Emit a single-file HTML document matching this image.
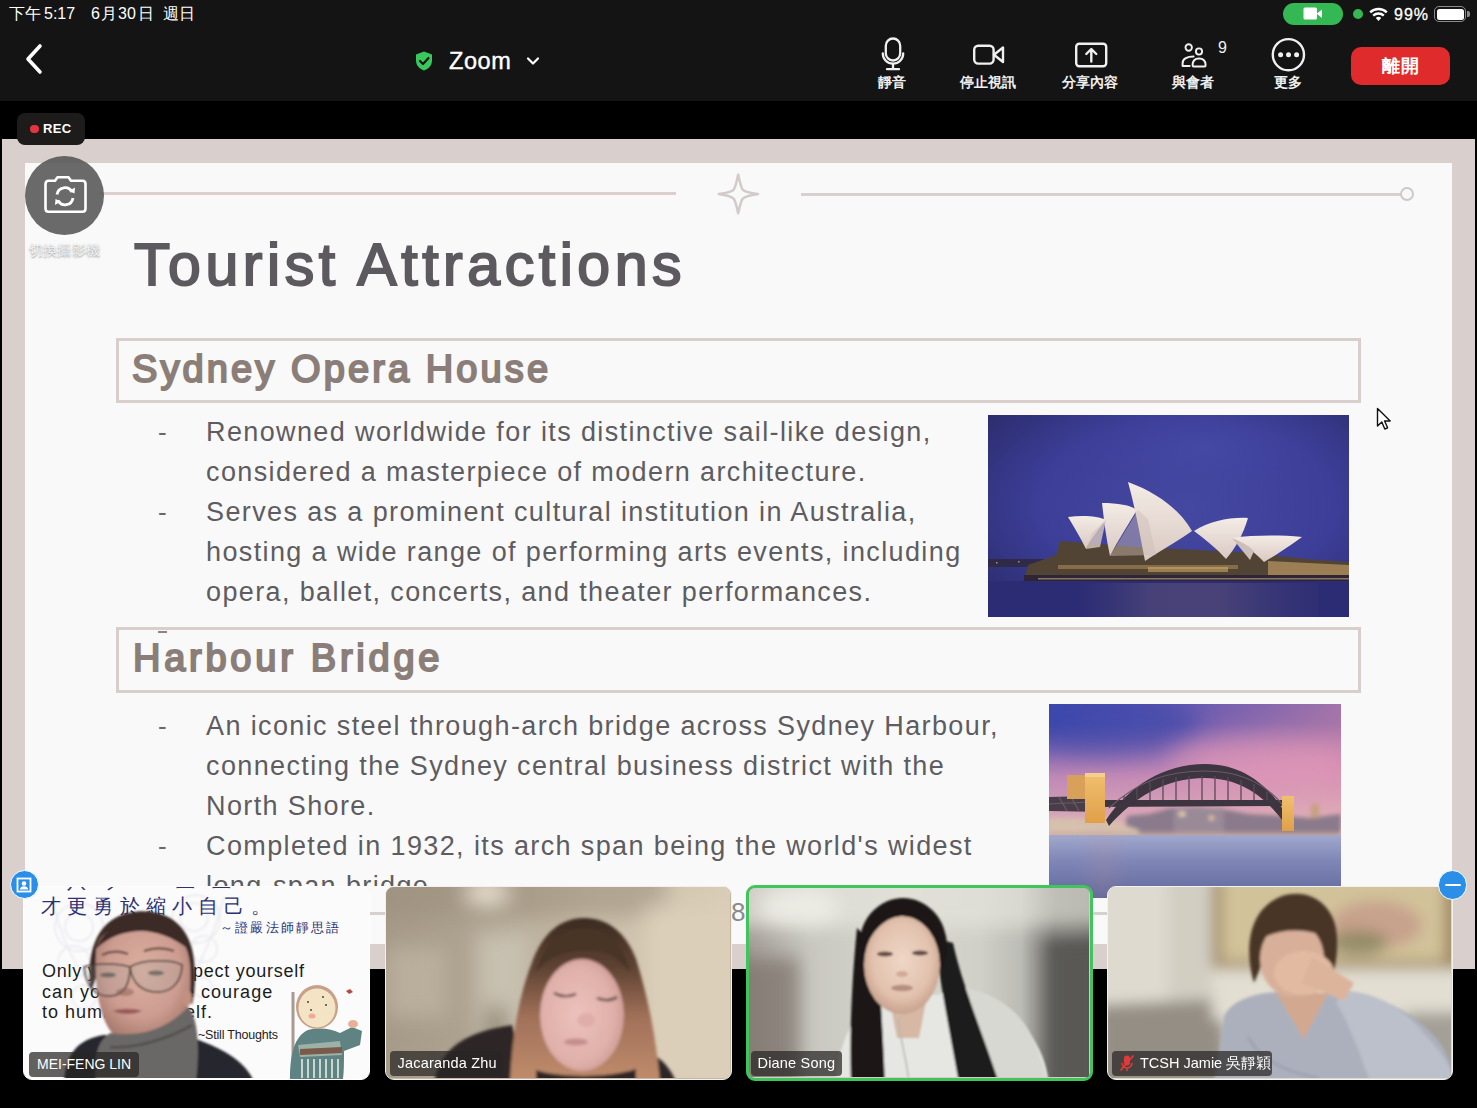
<!DOCTYPE html>
<html><head><meta charset="utf-8">
<style>
*{margin:0;padding:0;box-sizing:border-box}
html,body{width:1477px;height:1108px;overflow:hidden;background:#000;font-family:"Liberation Sans",sans-serif;position:relative}
.abs{position:absolute}
#top{position:absolute;left:0;top:0;width:1477px;height:101px;background:#141414}
.st{color:#fff;font-size:16px;top:4px;white-space:nowrap;line-height:20px}
.lbl{position:absolute;color:#f0f0f0;font-size:14px;font-weight:bold;top:73px;white-space:nowrap;text-align:center;line-height:18px;width:80px;margin-left:-40px}
#slideOuter{left:2px;top:139px;width:1473px;height:830px;background:#d9d0cd}
#slide{left:25px;top:163px;width:1427px;height:781px;background:#f9f9f9;overflow:hidden}
.body{position:absolute;color:#5e5c60;font-size:27px;white-space:nowrap;line-height:40px;letter-spacing:1.38px;left:206px;margin-top:-0.4px}
.dash{position:absolute;color:#6a686c;font-size:26px;line-height:40px;left:158px}
.box{position:absolute;border:3px solid #d8cfcd}
.sec{position:absolute;color:#8b7e78;font-size:38px;font-weight:normal;white-space:nowrap;line-height:38px;letter-spacing:3.1px;-webkit-text-stroke:2px #8b7e78}
.tile{position:absolute;top:886px;height:194px;border-radius:9px;overflow:hidden}
.name{position:absolute;left:5px;bottom:5px;height:25px;background:rgba(40,38,36,.72);color:#fff;font-size:14.5px;line-height:25px;padding:0 8px;border-radius:4px;white-space:nowrap;letter-spacing:0.2px}
</style></head>
<body>
<!-- ===== TOP BAR ===== -->
<div id="top">
  <div class="abs st" style="left:9px;letter-spacing:-0.5px">下午</div><div class="abs st" style="left:44px">5:17</div><div class="abs st" style="left:91px">6</div><div class="abs st" style="left:101px">月</div><div class="abs st" style="left:118px">30</div><div class="abs st" style="left:138px">日</div><div class="abs st" style="left:163px">週日</div>
  <!-- green camera pill -->
  <div class="abs" style="left:1283px;top:3px;width:60px;height:22px;border-radius:11px;background:#34b853"></div>
  <svg class="abs" style="left:1300px;top:5px" width="26" height="18" viewBox="0 0 26 18">
    <rect x="3.5" y="2.5" width="13.5" height="12" rx="1.5" fill="#fff"/>
    <path d="M17 8.5 L22 4.5 V13 L17 9 Z" fill="#fff"/>
  </svg>
  <div class="abs" style="left:1353px;top:9px;width:10px;height:10px;border-radius:5px;background:#34b853"></div>
  <svg class="abs" style="left:1368px;top:6px" width="21" height="16" viewBox="0 0 21 16">
    <path d="M10.5 15 L13.2 12 A4 4 0 0 0 7.8 12 Z" fill="#fff"/>
    <path d="M5.2 9.6 A7.6 7.6 0 0 1 15.8 9.6" stroke="#fff" stroke-width="2.4" fill="none"/>
    <path d="M2.2 6.4 A12 12 0 0 1 18.8 6.4" stroke="#fff" stroke-width="2.4" fill="none"/>
  </svg>
  <div class="abs st" style="left:1394px;top:4.5px;font-size:16px;letter-spacing:1px;-webkit-text-stroke:0.3px #fff">99%</div>
  <div class="abs" style="left:1434px;top:6px;width:32px;height:16px;border-radius:5px;border:1.3px solid #8a8a8a"></div>
  <div class="abs" style="left:1436.5px;top:8.5px;width:27px;height:11px;border-radius:2.5px;background:#fff"></div>
  <div class="abs" style="left:1467px;top:11px;width:2.5px;height:6px;border-radius:0 2px 2px 0;background:#8a8a8a"></div>

  <!-- back chevron -->
  <svg class="abs" style="left:20px;top:42px" width="28" height="34" viewBox="0 0 28 34">
    <path d="M20 4 L8 17 L20 30" stroke="#fff" stroke-width="3.6" fill="none" stroke-linecap="round" stroke-linejoin="round"/>
  </svg>
  <!-- shield -->
  <svg class="abs" style="left:413px;top:50px" width="22" height="22" viewBox="0 0 22 22">
    <path d="M11 1.5 L19 4.5 V10.5 C19 15.5 15.5 19 11 20.5 C6.5 19 3 15.5 3 10.5 V4.5 Z" fill="#38c85c"/>
    <path d="M7 11 L10 14 L15.5 8" stroke="#141414" stroke-width="2.2" fill="none" stroke-linecap="round" stroke-linejoin="round"/>
  </svg>
  <div class="abs" style="left:449px;top:48px;color:#fff;font-size:23.5px;line-height:26px;letter-spacing:0.6px;-webkit-text-stroke:0.4px #fff">Zoom</div>
  <svg class="abs" style="left:524px;top:54px" width="18" height="14" viewBox="0 0 18 14">
    <path d="M4 4.5 L9 9.5 L14 4.5" stroke="#fff" stroke-width="2.2" fill="none" stroke-linecap="round" stroke-linejoin="round"/>
  </svg>

  <!-- mic -->
  <svg class="abs" style="left:878px;top:36px" width="30" height="36" viewBox="0 0 30 36">
    <rect x="7.8" y="2.5" width="14.4" height="22" rx="7.2" stroke="#f0f0f0" stroke-width="2.3" fill="none"/>
    <path d="M4.8 17.5 A10.2 10.2 0 0 0 25.2 17.5" stroke="#f0f0f0" stroke-width="2.3" fill="none" stroke-linecap="round"/>
    <path d="M15 28 V33 M9 33.2 H21" stroke="#f0f0f0" stroke-width="2.3" stroke-linecap="round"/>
  </svg>
  <div class="lbl" style="left:892px">靜音</div>
  <!-- video -->
  <svg class="abs" style="left:970px;top:42px" width="38" height="26" viewBox="0 0 38 26">
    <rect x="4.2" y="3.8" width="19.4" height="17.8" rx="4" stroke="#f0f0f0" stroke-width="2.4" fill="none"/>
    <path d="M24 12.7 L33 5.5 V20 Z" stroke="#f0f0f0" stroke-width="2.4" fill="none" stroke-linejoin="round"/>
  </svg>
  <div class="lbl" style="left:988px">停止視訊</div>
  <!-- share -->
  <svg class="abs" style="left:1072px;top:40px" width="38" height="30" viewBox="0 0 38 30">
    <rect x="4.2" y="3.8" width="30" height="22.4" rx="3" stroke="#f0f0f0" stroke-width="2.4" fill="none"/>
    <path d="M19.3 21.5 V9.5 M14.3 14 L19.3 9 L24.3 14" stroke="#f0f0f0" stroke-width="2.4" fill="none" stroke-linecap="round" stroke-linejoin="round"/>
  </svg>
  <div class="lbl" style="left:1090px">分享內容</div>
  <!-- participants -->
  <svg class="abs" style="left:1178px;top:40px" width="32" height="30" viewBox="0 0 32 30">
    <circle cx="10.7" cy="7.5" r="3.2" stroke="#f0f0f0" stroke-width="1.9" fill="none"/>
    <circle cx="21" cy="11.5" r="3.1" stroke="#f0f0f0" stroke-width="1.9" fill="none"/>
    <path d="M15.6 16.6 C9.5 16.6 4.6 18.5 4.6 23.2 V26 H11.6" stroke="#f0f0f0" stroke-width="2" fill="none" stroke-linecap="round" stroke-linejoin="round"/>
    <path d="M15.6 26.4 H26.6 C27.3 26.4 27.6 26 27.6 25.2 C27.6 20.8 24.8 18.5 21 18.5 C17.3 18.5 14.6 20.8 14.6 25.2 C14.6 26 14.9 26.4 15.6 26.4 Z" stroke="#f0f0f0" stroke-width="2" fill="none"/>
  </svg>
  <div class="abs" style="left:1218px;top:40px;color:#f0f0f0;font-size:16px;line-height:16px">9</div>
  <div class="lbl" style="left:1193px">與會者</div>
  <!-- more -->
  <svg class="abs" style="left:1270px;top:37px" width="36" height="36" viewBox="0 0 36 36">
    <circle cx="18.4" cy="17.7" r="15.6" stroke="#f0f0f0" stroke-width="2.4" fill="none"/>
    <circle cx="10.6" cy="17.7" r="2.5" fill="#f0f0f0"/>
    <circle cx="18.5" cy="17.7" r="2.5" fill="#f0f0f0"/>
    <circle cx="26.6" cy="17.7" r="2.5" fill="#f0f0f0"/>
  </svg>
  <div class="lbl" style="left:1288px">更多</div>
  <!-- leave -->
  <div class="abs" style="left:1351px;top:47px;width:99px;height:38px;border-radius:10px;background:#df2b2b;color:#fff;font-size:18px;font-weight:bold;line-height:38px;text-align:center;letter-spacing:1px">離開</div>
</div>

<!-- ===== SLIDE ===== -->
<div class="abs" id="slideOuter"></div>
<div class="abs" id="slide"></div>
<div class="abs" id="content" style="left:0;top:0;width:1477px;height:886px;overflow:hidden">
  <!-- decorative top lines -->
  <div class="abs" style="left:100px;top:192px;width:576px;height:3px;background:#dccfcd"></div>
  <div class="abs" style="left:801px;top:192.5px;width:600px;height:3px;background:#d6d0ce"></div>
  <div class="abs" style="left:1400px;top:187px;width:14px;height:14px;border-radius:7px;border:2.5px solid #cfc9c7;background:#f9f8f8"></div>
  <svg class="abs" style="left:716px;top:171px" width="46" height="46" viewBox="0 0 46 46">
    <path d="M22.2 3.6 C24 12 25 16.5 26.6 18.6 C28.5 20.5 33 21.8 42 23.1 C33 24.5 28.5 25.8 26.6 27.8 C25 30 24 34 22.2 42.3 C20.4 34 19.4 30 17.8 27.8 C15.9 25.8 11.4 24.5 2.8 23.1 C11.4 21.8 15.9 20.5 17.8 18.6 C19.4 16.5 20.4 12 22.2 3.6 Z" stroke="#d2cbca" stroke-width="2.5" fill="none" stroke-linejoin="round"/>
  </svg>

  <div class="abs" style="left:134px;top:236px;color:#5d5a5f;font-size:59px;font-weight:normal;line-height:59px;letter-spacing:4.55px;white-space:nowrap;-webkit-text-stroke:2px #5d5a5f">Tourist Attractions</div>

  <div class="box" style="left:116px;top:338px;width:1245px;height:65px"></div>
  <div class="sec" style="left:132px;top:350px">Sydney Opera House</div>

  <div class="dash" style="top:412px">-</div>
  <div class="body" style="top:412px">Renowned worldwide for its distinctive sail-like design,</div>
  <div class="body" style="top:452px">considered a masterpiece of modern architecture.</div>
  <div class="dash" style="top:492px">-</div>
  <div class="body" style="top:492px">Serves as a prominent cultural institution in Australia,</div>
  <div class="body" style="top:532px">hosting a wide range of performing arts events, including</div>
  <div class="body" style="top:572px">opera, ballet, concerts, and theater performances.</div>

  <div class="box" style="left:116px;top:627px;width:1245px;height:66px"></div>
  <div class="abs" style="left:158px;top:631px;width:9px;height:2px;background:#8b8589"></div>
  <div class="sec" style="left:133px;top:639px;letter-spacing:3.75px">Harbour Bridge</div>

  <div class="dash" style="top:706px">-</div>
  <div class="body" style="top:706px">An iconic steel through-arch bridge across Sydney Harbour,</div>
  <div class="body" style="top:746px">connecting the Sydney central business district with the</div>
  <div class="body" style="top:786px">North Shore.</div>
  <div class="dash" style="top:826px">-</div>
  <div class="body" style="top:826px">Completed in 1932, its arch span being the world's widest</div>
  <div class="body" style="top:866px">long-span bridge.</div>

  <div id="opera" class="abs" style="left:988px;top:415px;width:361px;height:202px;overflow:hidden"><svg width="361" height="202" viewBox="0 0 361 202" style="filter:blur(0.5px)">
  <defs>
    <radialGradient id="osky" cx="0.55" cy="0.45" r="0.75">
      <stop offset="0" stop-color="#4649a2"/>
      <stop offset="0.55" stop-color="#3c3e98"/>
      <stop offset="1" stop-color="#2a2a68"/>
    </radialGradient>
    <radialGradient id="oglow" cx="0.6" cy="0.2" r="0.5">
      <stop offset="0" stop-color="#4a4ea8" stop-opacity="0.6"/>
      <stop offset="1" stop-color="#3a3c96" stop-opacity="0"/>
    </radialGradient>
    <linearGradient id="owater" x1="0" y1="0" x2="0" y2="1">
      <stop offset="0" stop-color="#2c2f74"/>
      <stop offset="1" stop-color="#2a2c70"/>
    </linearGradient>
    <linearGradient id="osail" x1="0" y1="0" x2="0" y2="1">
      <stop offset="0" stop-color="#f4ece6"/>
      <stop offset="1" stop-color="#d9c9c2"/>
    </linearGradient>
    <linearGradient id="orefl" x1="0" y1="0" x2="1" y2="0">
      <stop offset="0" stop-color="#8a7a8a" stop-opacity="0"/>
      <stop offset="0.3" stop-color="#b89a8a" stop-opacity="0.55"/>
      <stop offset="0.6" stop-color="#c8a88a" stop-opacity="0.5"/>
      <stop offset="1" stop-color="#8a7a8a" stop-opacity="0.1"/>
    </linearGradient>
  </defs>
  <rect width="361" height="202" fill="url(#osky)"/>
  <rect width="361" height="160" fill="url(#oglow)"/>
  <rect y="166" width="361" height="36" fill="#2c2c74"/>
  <rect x="90" y="168" width="240" height="34" fill="url(#orefl)" opacity="0.35"/>
  <!-- shoreline -->
    <rect x="0" y="144" width="60" height="8" fill="#2e2a48"/>
  <g fill="#e8c070" opacity="0.7"><rect x="8" y="147" width="1.5" height="1.5"/><rect x="30" y="146" width="1.5" height="1.5"/><rect x="48" y="148" width="1.5" height="1.5"/></g>
  <!-- base building -->
  <path d="M72 126 L150 132 L250 137 L320 144 L361 147 L361 166 L36 166 L40 150 L68 140 Z" fill="#524434"/>
  <rect x="70" y="150" width="180" height="4" fill="#c8a060" opacity="0.45"/>
  <rect x="160" y="152" width="80" height="5" fill="#e0b870" opacity="0.5"/>
  <path d="M280 146 L361 150 L361 162 L280 160 Z" fill="#a8885a" opacity="0.85"/>
  <rect x="36" y="160" width="325" height="6" fill="#2e2636"/>
  <rect x="50" y="163" width="311" height="1.5" fill="#e8c888" opacity="0.5"/>
  <!-- sails -->
  <path d="M80 102 C95 100 110 101 118 105 C110 115 102 125 98 134 C92 122 86 112 80 102 Z" fill="url(#osail)"/>
  <path d="M114 88 C130 88 142 90 149 95 C140 110 130 125 122 141 C118 123 116 105 114 88 Z" fill="url(#osail)"/>
  <path d="M140 67 C170 78 192 95 204 116 C190 126 172 136 157 146 C152 120 147 92 140 67 Z" fill="url(#osail)"/>
  <path d="M206 116 C222 106 242 102 260 103 C255 120 247 134 238 144 C228 133 217 124 206 116 Z" fill="url(#osail)"/>
  <path d="M244 123 C266 120 292 120 314 122 C300 132 288 140 276 147 C268 138 256 130 244 123 Z" fill="url(#osail)"/>
  <path d="M244 123 C252 126 260 130 266 136 L262 145 Z" fill="#cdbfb8"/>
  <path d="M98 134 L104 118 L118 105 L112 132 Z" fill="#d8c8c0" opacity="0.8"/>
  <path d="M150 95 L160 104 L168 140 L122 141 Z" fill="#cdbcb3" opacity="0.45"/>
  <!-- lights -->
  
</svg></div>

</div>


<div id="bridge" class="abs" style="left:1049px;top:704px;width:292px;height:193.5px;overflow:hidden"><svg width="292" height="200" viewBox="0 0 292 200">
  <defs>
    <linearGradient id="bsky" x1="0" y1="0" x2="1" y2="0.35">
      <stop offset="0" stop-color="#3d48b0"/>
      <stop offset="0.45" stop-color="#6d5cb0"/>
      <stop offset="1" stop-color="#b07aa8"/>
    </linearGradient>
    <linearGradient id="bpink" x1="0" y1="0" x2="0" y2="1">
      <stop offset="0" stop-color="#e090b0" stop-opacity="0"/>
      <stop offset="0.45" stop-color="#e29ab8" stop-opacity="0.75"/>
      <stop offset="0.8" stop-color="#e4b0b8" stop-opacity="0.9"/>
      <stop offset="1" stop-color="#e8c4b4" stop-opacity="1"/>
    </linearGradient>
    <linearGradient id="bwater" x1="0" y1="0" x2="0" y2="1">
      <stop offset="0" stop-color="#a2a8cc"/>
      <stop offset="0.35" stop-color="#8088b8"/>
      <stop offset="1" stop-color="#5c6296"/>
    </linearGradient>
    <linearGradient id="bpyl" x1="0" y1="0" x2="0" y2="1">
      <stop offset="0" stop-color="#f0c070"/>
      <stop offset="1" stop-color="#e0a048"/>
    </linearGradient>
    <filter id="bblur" x="-100%" y="-100%" width="300%" height="300%"><feGaussianBlur stdDeviation="12"/></filter>
    <filter id="bsoft" x="-10%" y="-10%" width="120%" height="120%"><feGaussianBlur stdDeviation="0.7"/></filter>
    <filter id="bcity" x="-10%" y="-50%" width="120%" height="200%"><feGaussianBlur stdDeviation="2"/></filter>
  </defs>
  <rect width="292" height="140" fill="url(#bsky)"/>
  <rect y="20" width="292" height="115" fill="url(#bpink)"/>
  <ellipse cx="60" cy="20" rx="90" ry="30" fill="#3a46a8" opacity="0.6" filter="url(#bblur)"/>
  <ellipse cx="210" cy="55" rx="90" ry="22" fill="#f0a0bc" opacity="0.5" filter="url(#bblur)"/>
  <!-- city -->
  <g filter="url(#bcity)">
    <path d="M75 132 L78 112 L100 110 L122 104 L150 103 L178 106 L200 110 L240 112 L260 114 L292 110 L292 132 Z" fill="#8a7a8c"/>
    <rect x="125" y="104" width="50" height="26" fill="#9a8a98"/>
    <rect x="130" y="108" width="6" height="4" fill="#f0d8b0"/>
    <rect x="160" y="112" width="5" height="4" fill="#e8c8a0"/>
    <path d="M0 114 L60 116 L90 126 L90 134 L0 134 Z" fill="#d6c0ae"/>
    <rect x="0" y="128" width="292" height="5" fill="#c8a898" opacity="0.7"/>
    <rect x="262" y="100" width="8" height="14" fill="#c8a080"/>
  </g>
  <!-- water -->
  <rect y="131" width="292" height="70" fill="url(#bwater)"/>
  <rect x="45" y="131" width="18" height="66" fill="#c8909a" opacity="0.25" filter="url(#bblur)"/>
  <g filter="url(#bsoft)">
    <!-- approach span -->
    <path d="M0 93 L40 92 L56 98 L56 108 L0 107 Z" fill="#4a3e48"/>
    <path d="M0 100 L40 98 M10 93 L18 107 M22 93 L30 107" stroke="#6a5a62" stroke-width="1.2"/>
    <!-- deck -->
    <path d="M40 96 L240 96 L240 102 L40 103 Z" fill="#3e3440"/>
    <!-- arch -->
    <path d="M57 116 C80 82 115 60 156 60 C196 60 222 84 238 112 L240 126 C222 98 196 74 156 74 C116 74 84 94 60 122 Z" fill="#3e3440"/>
    <path d="M60 104 C90 76 120 67 156 67 C192 67 218 80 236 104" stroke="#6a5a68" stroke-width="1.2" fill="none"/>
    <g stroke="#5a4a58" stroke-width="1.3">
      <path d="M75 92 V96 M88 84 V96 M101 78 V96 M114 75 V96 M127 73 V96 M140 72 V96 M153 72 V96 M166 72 V96 M179 73 V96 M192 76 V96 M205 80 V96 M218 88 V96"/>
    </g>
    <!-- pylons -->
    <rect x="18" y="71" width="18" height="24" fill="#d8a058"/>
    <rect x="36" y="69" width="20" height="50" fill="url(#bpyl)"/>
    <rect x="36" y="69" width="20" height="4" fill="#f4d090"/>
    <rect x="233" y="92" width="12" height="35" fill="url(#bpyl)"/>
  </g>
</svg></div>
<!-- ===== BOTTOM SLIDE BITS ===== -->
<div class="abs" style="left:731px;top:897px;color:#8a8a8c;font-size:26px;line-height:30px">8</div>
<div class="abs" style="left:370px;top:912px;width:15px;height:2.5px;background:#d5cfcd"></div>
<div class="abs" style="left:1092px;top:912px;width:15px;height:2.5px;background:#d5cfcd"></div>

<!-- ===== TILE 1 ===== -->
<div class="tile" style="left:23px;width:347px;background:#fbfbfc;border:1.5px solid #fff">
  <svg class="abs" style="left:0;top:0" width="344" height="191" viewBox="0 0 344 191">
    <defs><filter id="t1sw"><feGaussianBlur stdDeviation="0.8"/></filter></defs>
    <g stroke="#dedee4" stroke-width="1.4" fill="none" filter="url(#t1sw)" opacity="0.6">
      <circle cx="55" cy="40" r="14"/><circle cx="55" cy="40" r="24"/><circle cx="50" cy="75" r="16"/>
      <circle cx="170" cy="30" r="14"/><circle cx="172" cy="32" r="24"/><circle cx="180" cy="62" r="13"/>
      <path d="M30 20 C40 60 60 100 90 120"/><path d="M200 10 C190 50 170 90 150 120"/>
      <circle cx="60" cy="110" r="12"/><circle cx="178" cy="100" r="10"/>
    </g>
  </svg>
  <div class="abs" style="left:18px;top:-15px;color:#2b3272;font-size:19px;line-height:20px;letter-spacing:6px;white-space:nowrap">一八 ブ 一 二 二 一</div>
  <div class="abs" style="left:17px;top:8px;color:#2b3272;font-size:19.5px;line-height:22px;letter-spacing:6.2px;white-space:nowrap">才更勇於縮小自己。</div>
  <div class="abs" style="left:196px;top:34px;color:#2b3272;font-size:12.5px;line-height:14px;letter-spacing:2.2px;white-space:nowrap">～證嚴法師靜思語</div>
  <div class="abs" style="left:18px;top:74px;color:#1c1c1c;font-size:18px;line-height:20.5px;white-space:nowrap;letter-spacing:0.75px">Only you who respect yourself</div>
  <div class="abs" style="left:18px;top:94.5px;color:#1c1c1c;font-size:18px;line-height:20.5px;white-space:nowrap;letter-spacing:1px">can you have the courage</div>
  <div class="abs" style="left:18px;top:115px;color:#1c1c1c;font-size:18px;line-height:20.5px;white-space:nowrap;letter-spacing:1px">to humble yourself.</div>
  <div class="abs" style="left:174px;top:141px;color:#1c1c1c;font-size:12.5px;line-height:14px;white-space:nowrap;letter-spacing:-0.2px">~Still Thoughts</div>
  <!-- cartoon -->
  <svg class="abs" style="left:262px;top:94px" width="82" height="98" viewBox="0 0 82 98">
    <defs><filter id="t1c"><feGaussianBlur stdDeviation="0.7"/></filter></defs>
    <g filter="url(#t1c)">
      <path d="M7 11 V98" stroke="#a89a90" stroke-width="3"/>
      <path d="M4 98 C4 75 8 55 22 49 C34 46 46 48 54 52 L66 46 L76 50 L74 64 L58 70 C58 80 58 90 57 98 Z" fill="#5e8282"/>
      <path d="M12 64 L54 60 L56 74 L14 76 Z" fill="#b8c4b8" opacity="0.7"/>
      <path d="M14 68 L56 66 L56 72 L14 74 Z" fill="#7a5a48"/>
      <path d="M16 78 V97 M22 78 V97 M28 78 V97 M34 78 V97 M40 78 V97 M46 78 V97 M52 78 V97" stroke="#c8d8d0" stroke-width="2"/>
      <ellipse cx="31" cy="26" rx="21" ry="22" fill="#c8a088"/>
      <ellipse cx="31" cy="27" rx="18.5" ry="19.5" fill="#f4e4c6"/>
      <circle cx="22" cy="21" r="0.9" fill="#3a3030"/><circle cx="37" cy="16" r="0.9" fill="#3a3030"/>
      <circle cx="40" cy="24" r="0.9" fill="#3a3030"/><circle cx="25" cy="29" r="0.9" fill="#3a3030"/>
      <ellipse cx="26" cy="35" rx="3.5" ry="2.5" fill="#f0a090" opacity="0.85"/>
      <ellipse cx="67" cy="43" rx="5" ry="4" fill="#e8b098"/>
      <path d="M60 10 L64 8 L67 11 L63 13 Z" fill="#b84a3a"/>
    </g>
  </svg>
  <!-- woman -->
  <svg class="abs" style="left:0;top:0" width="344" height="191" viewBox="0 0 344 191">
    <defs>
      <filter id="t1s" x="-20%" y="-20%" width="140%" height="140%"><feGaussianBlur stdDeviation="1.1"/></filter>
      <radialGradient id="t1face" cx="0.5" cy="0.4" r="0.6">
        <stop offset="0" stop-color="#dab0a0"/>
        <stop offset="0.65" stop-color="#cc9c90"/>
        <stop offset="1" stop-color="#a87a6e"/>
      </radialGradient>
    </defs>
    <g filter="url(#t1s)">
      <path d="M67 104 C62 70 70 34 104 26 C132 20 160 30 168 62 C172 80 172 100 168 118 L150 70 L80 70 Z" fill="#3a2a26"/>
      <path d="M72 66 C72 46 92 36 118 36 C146 36 164 50 166 78 C168 110 164 140 146 151 C132 157 108 157 94 151 C76 140 70 100 72 66 Z" fill="url(#t1face)"/>
      <path d="M72 62 C80 40 100 32 120 33 C140 34 158 44 164 62 C150 50 130 44 118 44 C100 44 84 50 72 62 Z" fill="#3a2a26"/>
      <path d="M78 68 C86 64 96 64 104 67" stroke="#6a4a40" stroke-width="2.4" fill="none"/>
      <path d="M120 64 C130 60 142 61 150 64" stroke="#6a4a40" stroke-width="2.4" fill="none"/>
      <path d="M60 80 C70 76 96 76 106 80 C106 95 102 107 88 109 C72 110 62 100 60 80 Z" fill="#9aa8a4" fill-opacity="0.18" stroke="#4a3c38" stroke-width="1.6"/>
      <path d="M106 80 C118 72 148 72 158 78 C158 92 150 104 136 105 C118 106 108 96 106 80 Z" fill="#9aa8a4" fill-opacity="0.18" stroke="#4a3c38" stroke-width="1.6"/>
      <ellipse cx="84" cy="88" rx="8" ry="2.5" fill="#3e4a48" opacity="0.6"/>
      <ellipse cx="132" cy="86" rx="8" ry="2.5" fill="#3e4a48" opacity="0.6"/>
      <ellipse cx="101" cy="105" rx="9" ry="4" fill="#8a5e52" opacity="0.5"/>
      <path d="M89 124 C96 121 110 121 118 124 C110 128 96 128 89 124 Z" fill="#9a5a5c"/>
      <ellipse cx="163" cy="111" rx="5" ry="8" fill="#c29080"/>
      <path d="M40 195 C42 165 55 152 80 148 L172 152 C200 162 222 175 230 195 Z" fill="#26262e"/>
      <path d="M72 195 C70 172 72 155 86 146 C108 150 140 146 164 120 C174 130 176 160 172 195 Z" fill="#6a6866"/>
      <path d="M86 160 C110 162 145 152 168 138" stroke="#54524f" stroke-width="3" fill="none"/>
    </g>
  </svg>
  <div class="name" style="left:5px;bottom:2.5px;width:110px;letter-spacing:0;font-size:14px">MEI-FENG LIN</div>
</div>

<!-- ===== TILE 2 ===== -->
<div class="tile" style="left:384.5px;width:347px;border:1.5px solid #f2f0ee;background:#c4b8a4">
  <svg class="abs" style="left:0;top:0" width="344" height="191" viewBox="0 0 344 191">
    <defs>
      <linearGradient id="t2bg" x1="0" y1="0" x2="1" y2="0">
        <stop offset="0" stop-color="#a69a88"/>
        <stop offset="0.3" stop-color="#b0a592"/>
        <stop offset="0.6" stop-color="#cbbfaa"/>
        <stop offset="1" stop-color="#dacdb8"/>
      </linearGradient>
      <linearGradient id="t2hair" x1="0" y1="0" x2="0" y2="1">
        <stop offset="0" stop-color="#3a2a20"/>
        <stop offset="0.3" stop-color="#5e4232"/>
        <stop offset="0.6" stop-color="#a07058"/>
        <stop offset="1" stop-color="#c08c6c"/>
      </linearGradient>
      <radialGradient id="t2face" cx="0.45" cy="0.5" r="0.6">
        <stop offset="0" stop-color="#ecc2bc"/>
        <stop offset="0.7" stop-color="#e0b0aa"/>
        <stop offset="1" stop-color="#c89890"/>
      </radialGradient>
      <filter id="t2b" x="-30%" y="-30%" width="160%" height="160%"><feGaussianBlur stdDeviation="10"/></filter>
      <filter id="t2s" x="-20%" y="-20%" width="140%" height="140%"><feGaussianBlur stdDeviation="1.6"/></filter>
    </defs>
    <rect width="344" height="191" fill="url(#t2bg)"/>
    <g filter="url(#t2b)">
      <rect x="-20" y="-20" width="300" height="50" fill="#9a8e7c" opacity="0.55"/>
      <ellipse cx="101" cy="6" rx="22" ry="12" fill="#e8e0d0"/>
      <rect x="90" y="45" width="55" height="105" fill="#cac2b2" opacity="0.9"/>
      <rect x="100" y="120" width="20" height="35" fill="#8a806c" opacity="0.9"/>
      <rect x="0" y="60" width="60" height="70" fill="#c0b6a4" opacity="0.7"/>
      <rect x="260" y="20" width="100" height="180" fill="#dccfba"/>
    </g>
    <g filter="url(#t2s)">
      <path d="M48 195 C55 160 80 145 126 138 L140 195 Z" fill="#2e2826"/>
      <path d="M255 165 C268 165 282 175 290 195 L250 195 Z" fill="#2e2826"/>
      <path d="M124 195 C126 150 132 110 148 70 C160 42 178 31 198 31 C222 31 240 46 250 72 C262 110 270 150 274 195 Z" fill="url(#t2hair)"/>
      <ellipse cx="196" cy="128" rx="42" ry="56" fill="url(#t2face)"/>
      <path d="M150 85 C158 55 178 42 198 42 C220 42 238 56 244 85 C230 68 214 62 198 64 C180 64 162 70 150 85 Z" fill="#4a3428"/>
      <path d="M168 106 C175 110 183 110 190 107" stroke="#4a302a" stroke-width="2.2" fill="none"/>
      <path d="M211 111 C218 114 225 114 231 110" stroke="#4a302a" stroke-width="2.2" fill="none"/>
      <ellipse cx="200" cy="133" rx="9" ry="7" fill="#d8a4a0" opacity="0.6"/>
      <ellipse cx="190" cy="155" rx="12" ry="3.5" fill="#b87c7c" opacity="0.7"/>
      <path d="M150 183 C170 190 220 192 250 182 L250 195 L150 195 Z" fill="#2e2826"/>
    </g>
  </svg>
  <div class="name" style="left:4px;bottom:3px;width:113px;padding-left:8px">Jacaranda Zhu</div>
</div>

<!-- ===== TILE 3 ===== -->
<div class="tile" style="left:745.5px;top:885px;width:347px;height:195.5px;border:3.5px solid #3fc55c;background:#cfcfc8">
  <svg class="abs" style="left:0;top:0" width="340" height="189" viewBox="0 0 340 189">
    <defs>
      <linearGradient id="t3bg" x1="0" y1="0" x2="1" y2="0">
        <stop offset="0" stop-color="#a29c96"/>
        <stop offset="0.18" stop-color="#c8c8c0"/>
        <stop offset="0.45" stop-color="#d6d6ce"/>
        <stop offset="0.68" stop-color="#d0d0c8"/>
        <stop offset="0.8" stop-color="#bcbcb6"/>
        <stop offset="0.9" stop-color="#6a6864"/>
        <stop offset="1" stop-color="#585652"/>
      </linearGradient>
      <filter id="t3b" x="-20%" y="-20%" width="140%" height="140%"><feGaussianBlur stdDeviation="9"/></filter>
      <filter id="t3s" x="-20%" y="-20%" width="140%" height="140%"><feGaussianBlur stdDeviation="1.3"/></filter>
      <radialGradient id="t3face" cx="0.5" cy="0.45" r="0.55">
        <stop offset="0" stop-color="#efd6c6"/>
        <stop offset="0.7" stop-color="#e2c2ae"/>
        <stop offset="1" stop-color="#c8a28e"/>
      </radialGradient>
    </defs>
    <rect width="340" height="189" fill="url(#t3bg)"/>
    <g filter="url(#t3b)">
      <rect x="-20" y="-20" width="380" height="60" fill="#e4e4dc" opacity="0.7"/>
      <ellipse cx="50" cy="20" rx="40" ry="20" fill="#f0f0ea" opacity="0.8"/>
      <rect x="-20" y="70" width="70" height="140" fill="#7a706a" opacity="0.7"/>
      <rect x="300" y="50" width="55" height="160" fill="#5a5854"/>
    </g>
    <g filter="url(#t3s)">
      <path d="M86 195 C90 160 100 130 125 112 L180 108 C220 100 262 118 284 150 C294 166 298 180 300 195 Z" fill="#e6e6e2"/>
      <path d="M200 98 C240 100 270 120 284 150 C292 168 296 182 298 195 L240 195 C225 160 210 130 198 110 Z" fill="#d8d8d2"/>
      <path d="M140 108 L178 108 L170 150 L148 150 Z" fill="#d6b8a4"/>
      <path d="M150 130 C150 150 158 170 160 195" stroke="#b8b8b2" stroke-width="1.5" fill="none"/>
      <path d="M108 40 C104 80 100 140 102 195 L136 195 C134 150 132 110 128 60 Z" fill="#1c1818"/>
      <path d="M186 50 C190 90 200 140 210 195 L250 195 C232 140 214 100 204 55 Z" fill="#1e1a1a"/>
      <ellipse cx="154" cy="58" rx="44" ry="48" fill="#1c1818"/>
      <ellipse cx="153" cy="77" rx="38" ry="49" fill="url(#t3face)"/>
      <path d="M116 60 C120 30 135 18 154 18 C172 18 188 30 192 55 C180 36 166 28 154 28 C140 28 126 38 116 60 Z" fill="#1c1818"/>
      <ellipse cx="136" cy="66" rx="8" ry="2.6" fill="#4a3832" opacity="0.85"/>
      <ellipse cx="171" cy="65" rx="8" ry="2.6" fill="#4a3832" opacity="0.85"/>
      <ellipse cx="153" cy="86" rx="6" ry="3" fill="#c49a88" opacity="0.7"/>
      <ellipse cx="153" cy="100" rx="11" ry="3.2" fill="#a87a70" opacity="0.75"/>
    </g>
  </svg>
  <div class="name" style="left:2px;bottom:1.5px;width:91px;padding-left:7px">Diane Song</div>
</div>

<!-- ===== TILE 4 ===== -->
<div class="tile" style="left:1107px;width:345.5px;border:1.5px solid #f4f2ee;background:#dcd8cc">
  <svg class="abs" style="left:0;top:0" width="343" height="191" viewBox="0 0 343 191">
    <defs>
      <filter id="t4b" x="-20%" y="-20%" width="140%" height="140%"><feGaussianBlur stdDeviation="7"/></filter>
      <filter id="t4s" x="-20%" y="-20%" width="140%" height="140%"><feGaussianBlur stdDeviation="1.4"/></filter>
    </defs>
    <g filter="url(#t4b)">
      <rect x="-10" y="-10" width="130" height="140" fill="#dedad0"/>
      <rect x="60" y="-10" width="50" height="140" fill="#d2cec2"/>
      <path d="M-10 118 L112 112 L122 200 L-10 200 Z" fill="#948e84"/>
      <rect x="104" y="-10" width="250" height="92" fill="#a08a64"/>
      <rect x="114" y="-10" width="222" height="84" fill="#d2c29a"/>
      <ellipse cx="268" cy="38" rx="46" ry="24" fill="#c49a88" opacity="0.8"/>
      <ellipse cx="250" cy="56" rx="30" ry="13" fill="#8a8660" opacity="0.8"/>
      <rect x="104" y="82" width="250" height="50" fill="#e2ded2"/>
      <rect x="296" y="125" width="60" height="80" fill="#a4a098"/>
    </g>
    <g filter="url(#t4s)">
      <path d="M106 195 L116 130 C122 114 146 106 168 105 L218 106 C244 102 278 112 302 128 C328 146 345 168 345 195 Z" fill="#acb0bc"/>
      <path d="M236 104 C262 104 292 118 312 142 C330 162 345 178 345 195 L262 195 C250 160 238 130 228 116 Z" fill="#bcc0ca"/>
      <path d="M140 150 C150 170 175 185 210 191" stroke="#9ea2b2" stroke-width="3" fill="none"/>
      <path d="M168 106 L220 106 L196 152 Z" fill="#d2a890"/>
      <path d="M146 96 C136 62 140 22 174 9 C204 0 228 20 229 50 C230 72 226 86 221 96 L212 62 L160 62 Z" fill="#4a3428"/>
      <ellipse cx="184" cy="72" rx="32" ry="38" fill="#d8b09a"/>
      <path d="M149 54 C152 27 174 14 200 17 C216 20 224 36 226 54 C206 42 176 38 149 54 Z" fill="#4a3428"/>
      <ellipse cx="196" cy="86" rx="30" ry="22" fill="#e2baa2"/>
      <path d="M204 70 L246 96 L236 114 L194 96 Z" fill="#dcb49c"/>
    </g>
  </svg>
  <div class="name" style="left:4px;bottom:3px;width:160px;padding-left:28px;letter-spacing:0;overflow:hidden">TCSH Jamie 吳靜穎</div>
  <svg class="abs" style="left:11px;bottom:7px" width="16" height="18" viewBox="0 0 16 18">
    <rect x="5" y="1.5" width="6" height="10" rx="3" fill="#e23a3a"/>
    <path d="M3 9 A5 5 0 0 0 13 9 M8 14 V17" stroke="#e23a3a" stroke-width="1.6" fill="none"/>
    <path d="M1.5 16.5 L14.5 1.5" stroke="#e23a3a" stroke-width="1.8"/>
  </svg>
</div>

<!-- blue buttons -->
<div class="abs" style="left:9.5px;top:870px;width:29px;height:29px;border-radius:15px;background:#2b8fe8;border:1.5px solid #fff"></div>
<svg class="abs" style="left:14px;top:874.5px" width="20" height="20" viewBox="0 0 20 20">
  <rect x="3.5" y="3.5" width="13" height="13" stroke="#fff" stroke-width="1.8" fill="none"/>
  <circle cx="10" cy="8.5" r="2.3" fill="#fff"/>
  <path d="M5.8 14.5 C6.3 12 7.8 11.3 10 11.3 C12.2 11.3 13.7 12 14.2 14.5 Z" fill="#fff"/>
</svg>
<div class="abs" style="left:1437.5px;top:870px;width:29.5px;height:29.5px;border-radius:15px;background:#2b8fe8;border:1.5px solid #fff"></div>
<div class="abs" style="left:1444.5px;top:883.5px;width:16px;height:2.4px;background:#fff;border-radius:1px"></div>

<!-- ===== OVERLAYS ===== -->
<div class="abs" style="left:17px;top:112.5px;width:68px;height:32px;border-radius:8px;background:#1e1b1b"></div>
<div class="abs" style="left:30px;top:124.5px;width:8.5px;height:8.5px;border-radius:5px;background:#e5343d"></div>
<div class="abs" style="left:43px;top:121px;color:#fff;font-size:13px;font-weight:bold;line-height:15px;letter-spacing:0.3px">REC</div>
<div class="abs" style="left:25px;top:155.5px;width:79px;height:79px;border-radius:40px;background:rgba(85,85,85,.88)"></div>
<svg class="abs" style="left:40px;top:172px" width="50" height="44" viewBox="0 0 50 44">
  <path d="M5.5 12 C5.5 9.8 6.6 8.8 8.5 8.8 H15 L17.5 5.3 H28.5 L31 8.8 H42.5 C44.4 8.8 45.5 9.8 45.5 12 V36.5 C45.5 38.7 44.4 39.7 42.5 39.7 H8.5 C6.6 39.7 5.5 38.7 5.5 36.5 Z" stroke="#fff" stroke-width="2.6" fill="none" stroke-linejoin="round"/>
  <path d="M17 22.5 A8 8 0 0 1 32 20" stroke="#fff" stroke-width="2.8" fill="none"/>
  <path d="M29 19 L34.5 21.5 L35 15.5 Z" fill="#fff"/>
  <path d="M33 26 A8 8 0 0 1 18 28.5" stroke="#fff" stroke-width="2.8" fill="none"/>
  <path d="M21 29.5 L15.5 27 L15 33 Z" fill="#fff"/>
</svg>
<div class="abs" style="left:29px;top:243px;color:#f2f2f2;font-size:13.5px;line-height:16px;letter-spacing:0.2px;text-shadow:0 1px 2px rgba(0,0,0,.45)">切換攝影機</div>
<!-- cursor -->
<svg class="abs" style="left:1375px;top:406px" width="18" height="26" viewBox="0 0 18 26">
  <path d="M2.5 2.5 V20 L6.8 16 L9.8 23 L12.6 21.8 L9.6 15 H15.2 Z" fill="#fff" stroke="#111" stroke-width="1.4" stroke-linejoin="round"/>
</svg>
</body></html>
